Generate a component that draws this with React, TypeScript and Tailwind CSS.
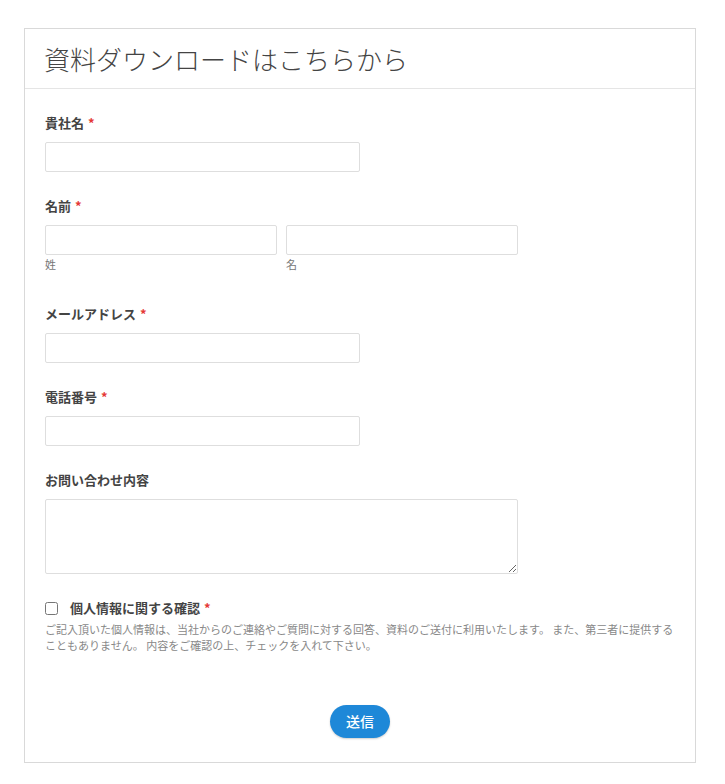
import React from "react";

const font = { fontFamily: '"Noto Sans CJK JP", "Noto Sans", sans-serif' };

function Req() {
  return <span className="ml-1 text-[#e53935]">*</span>;
}

function Label({ text, required }: { text: string; required?: boolean }) {
  return (
    <label className="block text-[13px] leading-[20px] font-bold text-[#444]">
      {text}
      {required && <Req />}
    </label>
  );
}

const inputCls =
  "block h-[30px] border border-[#dedede] rounded-[2px] bg-white px-2 text-[13px] focus:outline-none";

export default function App() {
  return (
    <div className="min-h-screen bg-white pt-[28px] pb-[20px]" style={font}>
      <div className="ml-[24px] w-[672px] border border-[#d9d9d9] bg-white">
        <div className="h-[60px] border-b border-[#e5e5e5] px-[19px] flex items-center">
          <h1 className="text-[26px] font-light text-[#444] leading-none">
            資料ダウンロードはこちらから
          </h1>
        </div>

        <form className="px-5 pt-[24px] pb-[24px]">
          <Label text="貴社名" required />
          <input className={`${inputCls} mt-[9px] w-[315px]`} type="text" />

          <div className="mt-[24px]">
            <Label text="名前" required />
            <div className="mt-[9px] flex gap-[9px]">
              <div>
                <input className={`${inputCls} w-[232px]`} type="text" />
                <div className="mt-[1px] text-[11px] leading-[16px] text-[#777]">姓</div>
              </div>
              <div>
                <input className={`${inputCls} w-[232px]`} type="text" />
                <div className="mt-[1px] text-[11px] leading-[16px] text-[#777]">名</div>
              </div>
            </div>
          </div>

          <div className="mt-[32px]">
            <Label text="メールアドレス" required />
            <input className={`${inputCls} mt-[9px] w-[315px]`} type="email" />
          </div>

          <div className="mt-[24px]">
            <Label text="電話番号" required />
            <input className={`${inputCls} mt-[9px] w-[315px]`} type="tel" />
          </div>

          <div className="mt-[24px]">
            <Label text="お問い合わせ内容" />
            <textarea
              className="mt-[9px] block h-[75px] w-[473px] border border-[#dedede] rounded-[2px] bg-white px-2 text-[13px] focus:outline-none"
            />
          </div>

          <div className="mt-[24px]">
            <div className="flex items-center gap-[12px]">
              <input type="checkbox" className="h-[13px] w-[13px] m-0" />
              <span className="text-[13px] leading-[20px] font-bold text-[#444]">
                個人情報に関する確認
                <Req />
              </span>
            </div>
            <p className="mt-[3px] text-[11px] leading-[16px] text-[#888]">
              ご記入頂いた個人情報は、当社からのご連絡やご質問に対する回答、資料のご送付に利用いたします。
              また、第三者に提供することもありません。 内容をご確認の上、チェックを入れて下さい。
            </p>
          </div>

          <div className="mt-[52px] flex justify-center">
            <button
              type="button"
              className="h-[33px] px-[16px] rounded-full bg-[#1e88d8] text-white text-[14px] font-medium shadow-[0_1px_2px_rgba(0,0,0,0.2)]"
            >
              送信
            </button>
          </div>
        </form>
      </div>
    </div>
  );
}
